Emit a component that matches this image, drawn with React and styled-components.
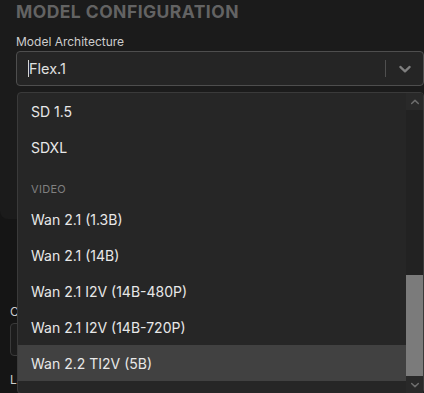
import React from "react";
import styled, { createGlobalStyle } from "styled-components";

const Global = createGlobalStyle`
  html, body { margin: 0; padding: 0; background: #151515; }
  body { font-family: Inter, "Noto Sans", "Liberation Sans", sans-serif; -webkit-font-smoothing: antialiased; }
  * { box-sizing: border-box; }
`;

const Page = styled.div`
  width: 424px;
  height: 393px;
  overflow: hidden;
  background: #151515;
  display: flex;
  flex-direction: column;
`;

const Card = styled.section`
  background: #1b1b1b;
  border-radius: 0 0 8px 8px;
  padding: 2px 0 133px 16px;
  display: flex;
  flex-direction: column;
`;

const SectionTitle = styled.h2`
  margin: 0;
  font-size: 17.5px;
  line-height: 20px;
  font-weight: 700;
  letter-spacing: 0.45px;
  color: #636363;
  text-transform: uppercase;
`;

const FieldLabel = styled.label`
  display: block;
  font-size: 12px;
  line-height: 16px;
  color: #cdcdcd;
  margin-top: ${(p) => p.$top || 0}px;
`;

const SelectWrap = styled.div`
  position: relative;
  margin-top: 1px;
`;

const SelectControl = styled.div`
  height: 35px;
  display: flex;
  align-items: center;
  background: #252525;
  border: 1px solid #4e4e4e;
  border-radius: 4px;
  padding-left: 11px;
`;

const Caret = styled.span`
  width: 1px;
  height: 17px;
  background: #d6d6d6;
`;

const SelectValue = styled.span`
  flex: 1;
  font-size: 14.5px;
  color: #e0e0e0;
`;

const Divider = styled.span`
  width: 1px;
  height: 17px;
  background: #4f4f4f;
`;

const Indicator = styled.span`
  width: 37px;
  display: flex;
  align-items: center;
  justify-content: center;
  color: #7f7f7f;
`;

const Menu = styled.div`
  position: absolute;
  top: calc(100% + 6px);
  left: 1px;
  right: 0;
  height: 302px;
  background: #262626;
  border: 1px solid #3a3a3a;
  border-radius: 4px;
  display: flex;
  overflow: hidden;
  z-index: 5;
`;

const List = styled.div`
  flex: 1;
  display: flex;
  flex-direction: column;
`;

const Option = styled.div`
  height: 36px;
  flex-shrink: 0;
  display: flex;
  align-items: center;
  padding-left: 13px;
  font-size: 14px;
  color: #e8e8e8;
  background: ${(p) => (p.$active ? "#414141" : "transparent")};
`;

const GroupHeading = styled.div`
  height: 36px;
  flex-shrink: 0;
  padding: 17px 0 0 13px;
  font-size: 11px;
  line-height: 14px;
  color: #808080;
  letter-spacing: 0.3px;
`;

const Scrollbar = styled.div`
  width: 17px;
  display: flex;
  flex-direction: column;
  background: #222222;
`;

const ScrollButton = styled.div`
  height: 17px;
  flex-shrink: 0;
  display: flex;
  align-items: center;
  justify-content: center;
  background: #292929;
  color: #6c6c6c;
`;

const Track = styled.div`
  flex: 1;
  display: flex;
  flex-direction: column;
`;

const Thumb = styled.div`
  height: 101px;
  background: #7b7b7b;
`;

const Lower = styled.section`
  padding: 85px 0 0 10px;
  display: flex;
  flex-direction: column;
`;

const TextInput = styled.div`
  margin-top: 3px;
  height: 33px;
  border: 1px solid #3a3a3a;
  border-radius: 4px;
  background: #1c1c1c;
`;

const Chevron = ({ dir = "down", size = 12, w = 1.8 }) => (
  <svg width={size} height={size} viewBox="0 0 12 12" fill="none" stroke="currentColor" strokeWidth={w} strokeLinecap="round" strokeLinejoin="round">
    {dir === "down" ? <polyline points="2,4.2 6,8 10,4.2" /> : <polyline points="2,7.8 6,4 10,7.8" />}
  </svg>
);

const items = [
  { type: "opt", label: "SD 1.5" },
  { type: "opt", label: "SDXL" },
  { type: "group", label: "VIDEO" },
  { type: "opt", label: "Wan 2.1 (1.3B)" },
  { type: "opt", label: "Wan 2.1 (14B)" },
  { type: "opt", label: "Wan 2.1 I2V (14B-480P)" },
  { type: "opt", label: "Wan 2.1 I2V (14B-720P)" },
  { type: "opt", label: "Wan 2.2 TI2V (5B)", active: true },
];

export default function App() {
  return (
    <Page>
      <Global />
      <Card>
        <SectionTitle>Model Configuration</SectionTitle>
        <FieldLabel $top={12}>Model Architecture</FieldLabel>
        <SelectWrap>
          <SelectControl>
            <Caret />
            <SelectValue>Flex.1</SelectValue>
            <Divider />
            <Indicator>
              <Chevron dir="down" size={14} w={1.9} />
            </Indicator>
          </SelectControl>
          <Menu>
            <List>
              {items.map((it) =>
                it.type === "group" ? (
                  <GroupHeading key={it.label}>{it.label}</GroupHeading>
                ) : (
                  <Option key={it.label} $active={it.active}>
                    {it.label}
                  </Option>
                )
              )}
            </List>
            <Scrollbar>
              <ScrollButton>
                <Chevron dir="up" size={10} w={1.8} />
              </ScrollButton>
              <Track>
                <Thumb style={{ marginTop: 165 }} />
              </Track>
              <ScrollButton>
                <Chevron dir="down" size={10} w={1.8} />
              </ScrollButton>
            </Scrollbar>
          </Menu>
        </SelectWrap>
      </Card>
      <Lower>
        <FieldLabel>Checkpoint Name</FieldLabel>
        <TextInput />
        <FieldLabel $top={16}>LoRA Rank</FieldLabel>
      </Lower>
    </Page>
  );
}
